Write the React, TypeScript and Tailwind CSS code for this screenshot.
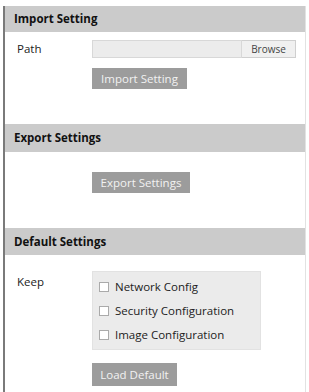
export default function App() {
  const font = { fontFamily: '"Open Sans", "Liberation Sans", sans-serif' };
  return (
    <div className="w-[309px] h-[392px] bg-white pt-[6px] pl-[3px] pr-[3px] overflow-hidden" style={font}>
      <div className="h-full border-l-2 border-[#7a7a7a] border-r border-r-[#e2e2e2]">
        {/* Import Setting */}
        <div className="h-[26px] bg-[#cbcbcb] pl-[9px] flex items-center text-[11.5px] font-bold text-[#111]">
          Import Setting
        </div>
        <div className="flex items-center mt-[8px] pl-[12px]">
          <div className="w-[75px] text-[11.5px] text-[#222]">Path</div>
          <div className="flex h-[18px]">
            <div className="w-[150px] bg-[#ececec] border border-[#d8d8d8]"></div>
            <button className="w-[54px] bg-[#f0f0f0] border border-l-0 border-[#cfcfcf] text-[10px] text-[#444] flex items-center justify-center">
              Browse
            </button>
          </div>
        </div>
        <div className="pl-[87px] mt-[10px]">
          <button className="h-[21px] w-[95px] bg-[#9c9c9c] text-[11.5px] text-[#f2f2f2] flex items-center justify-center">
            Import Setting
          </button>
        </div>

        {/* Export Settings */}
        <div className="mt-[35px] h-[28px] bg-[#cbcbcb] pl-[9px] flex items-center text-[11.5px] font-bold text-[#111]">
          Export Settings
        </div>
        <div className="pl-[87px] mt-[20px]">
          <button className="h-[21px] w-[98px] bg-[#9c9c9c] text-[11.5px] text-[#f2f2f2] flex items-center justify-center">
            Export Settings
          </button>
        </div>

        {/* Default Settings */}
        <div className="mt-[35px] h-[27px] bg-[#cbcbcb] pl-[9px] flex items-center text-[11.5px] font-bold text-[#111]">
          Default Settings
        </div>
        <div className="flex mt-[16px] pl-[12px]">
          <div className="w-[75px] text-[11.5px] text-[#222] leading-[14px] pt-[4px]">Keep</div>
          <div className="w-[169px] h-[79px] bg-[#ebebeb] border border-[#e2e2e2] flex flex-col justify-center gap-[9px] pl-[6px]">
            {['Network Config', 'Security Configuration', 'Image Configuration'].map((t) => (
              <div key={t} className="flex items-center gap-[6px] h-[15px]">
                <span className="w-[10px] h-[10px] bg-white border border-[#aaa]"></span>
                <span className="text-[11.5px] text-[#222]">{t}</span>
              </div>
            ))}
          </div>
        </div>
        <div className="pl-[87px] mt-[13px]">
          <button className="h-[23px] w-[85px] bg-[#9c9c9c] text-[11.5px] text-[#f2f2f2] flex items-center justify-center">
            Load Default
          </button>
        </div>
      </div>
    </div>
  );
}
